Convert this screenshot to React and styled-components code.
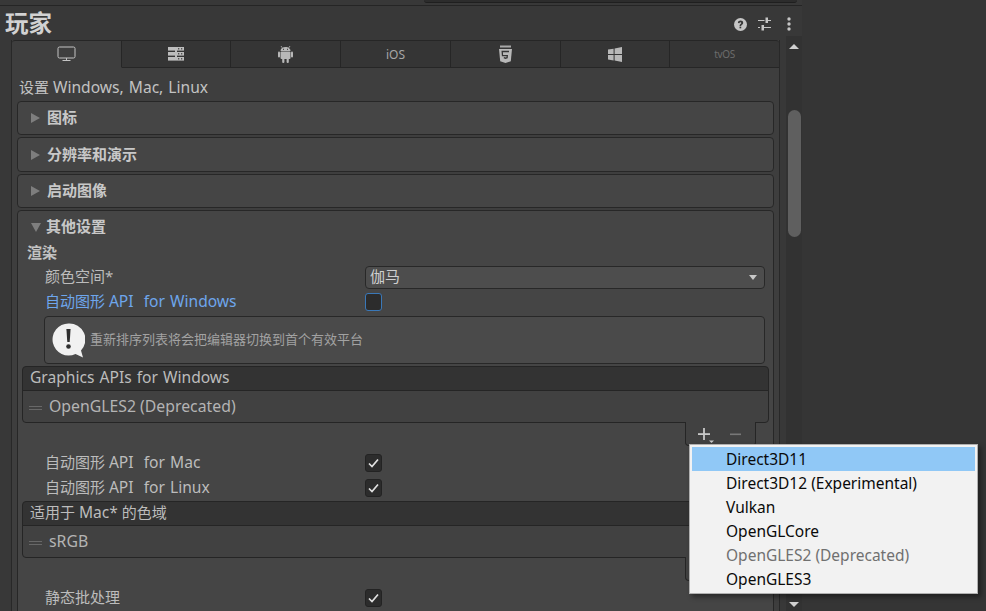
import React from "react";
import styled, { createGlobalStyle } from "styled-components";

const Global = createGlobalStyle`
  html, body { margin: 0; padding: 0; background: #353535; }
  * { box-sizing: border-box; }
`;

const FONT = `"Noto Sans", "Noto Sans CJK SC", sans-serif`;

const Frame = styled.div`
  position: relative;
  width: 986px;
  height: 611px;
  overflow: hidden;
  display: flex;
  background: #353535;
  font-family: ${FONT};
  font-size: 15px;
  color: #c2c2c2;
`;
const Inspector = styled.div`
  width: 802px;
  height: 611px;
  display: flex;
  flex-direction: column;
  background: #383838;
  box-shadow: 2px 0 3px rgba(0, 0, 0, 0.15);
  overflow: hidden;
`;
const TopStrip = styled.div`
  height: 6px;
  flex: none;
  display: flex;
  justify-content: flex-end;
  align-items: flex-start;
  padding-right: 5px;
  border-bottom: 1px solid #252525;
`;
const TopField = styled.div`
  width: 373px;
  height: 3px;
  background: #2c2c2c;
  border-bottom: 1px solid #1f1f1f;
  border-radius: 0 0 4px 4px;
`;
const TitleRow = styled.div`
  height: 30px;
  flex: none;
  display: flex;
  align-items: center;
  justify-content: space-between;
  padding: 0 6px 0 5px;
`;
const Title = styled.h1`
  margin: 3px 0 0;
  font-size: 23.5px;
  line-height: 30px;
  font-weight: 700;
  color: #d2d2d2;
`;
const Actions = styled.div`
  display: flex;
  align-items: center;
  gap: 9px;
  margin-top: 6px;
  color: #c4c4c4;
`;
const ActionSlot = styled.span`
  width: 15px;
  height: 16px;
  display: flex;
  align-items: center;
  justify-content: center;
`;
const Body = styled.div`
  flex: 1;
  min-height: 0;
  display: flex;
`;
const PanelColumn = styled.div`
  width: 769px;
  margin-left: 11px;
  padding-top: 4px;
  flex: none;
`;
const Panel = styled.div`
  height: 600px;
  background: #3e3e3e;
  border-left: 1px solid #282828;
  border-right: 1px solid #282828;
  display: flex;
  flex-direction: column;
`;
const Tabs = styled.div`
  height: 28px;
  flex: none;
  display: flex;
`;
const Tab = styled.div`
  flex: 1;
  display: flex;
  align-items: center;
  justify-content: center;
  background: ${(p) => (p.$active ? "#3e3e3e" : "#353535")};
  border-top: 1px solid #262626;
  border-bottom: 1px solid ${(p) => (p.$active ? "transparent" : "#262626")};
  border-right: 1px solid #262626;
  border-radius: ${(p) => (p.$active ? "3px 0 0 0" : p.$last ? "0 3px 0 0" : "0")};
  color: ${(p) => (p.$dim ? "#6c6c6c" : "#a6a6a6")};
  font-size: ${(p) => (p.$dim ? "10px" : "12px")};
  letter-spacing: ${(p) => (p.$dim ? "-0.3px" : "0")};
  &:last-child { border-right: 0; }
`;
const Caption = styled.div`
  height: 33px;
  flex: none;
  padding: 7px 0 0 7px;
  line-height: 24px;
  white-space: pre;
`;
const Latin = styled.span`
  font-size: 15.6px;
  word-spacing: 1px;
`;
const Stack = styled.div`
  margin: 0 5px;
  display: flex;
  flex-direction: column;
  gap: 2px;
`;
const Foldout = styled.section`
  flex: none;
  height: ${(p) => p.$h}px;
  background: #454545;
  border: 1px solid #272727;
  border-radius: 4px;
`;
const FoldHead = styled.div`
  height: ${(p) => p.$h || 32}px;
  display: flex;
  align-items: center;
  padding: 0 0 ${(p) => p.$pb ?? 3}px 13px;
  gap: 5px;
  font-weight: 700;
  color: #c8c8c8;
`;
const Tri = styled.span`
  width: 0;
  height: 0;
  flex: none;
  ${(p) =>
    p.$open
      ? `border-left: 5.5px solid transparent; border-right: 5.5px solid transparent; border-top: 9px solid #7e7e7e; margin-top: 3px;`
      : `border-top: 5.5px solid transparent; border-bottom: 5.5px solid transparent; border-left: 9px solid #7e7e7e; margin: 2px 2px 0 0;`}
`;
const Section = styled.div`
  height: 23px;
  padding-left: 9px;
  line-height: 21px;
  font-weight: 700;
  color: #c2c2c2;
`;
const Row = styled.div`
  height: 24.5px;
  display: flex;
  align-items: center;
  padding-left: 27px;
  margin-top: ${(p) => p.$mt || 0}px;
  padding-right: 8px;
`;
const Label = styled.span`
  width: 320px;
  flex: none;
  white-space: pre;
  line-height: 20px;
  margin-bottom: 2px;
  color: ${(p) => (p.$blue ? "#6ea6ec" : "#bcbcbc")};
`;
const Select = styled.div`
  flex: 1;
  height: 23px;
  display: flex;
  align-items: center;
  justify-content: space-between;
  padding: 0 7px 0 4px;
  background: #4d4d4d;
  border: 1px solid #282828;
  border-radius: 4px;
  color: #cfcfcf;
`;
const SelectText = styled.span`
  line-height: 18px;
  margin-bottom: 3px;
`;
const Caret = styled.span`
  width: 0;
  height: 0;
  margin-top: 1px;
  border-left: 4.5px solid transparent;
  border-right: 4.5px solid transparent;
  border-top: 5.5px solid #c8c8c8;
`;
const Check = styled.span`
  width: 17px;
  height: 18px;
  display: flex;
  align-items: center;
  justify-content: center;
  background: #2c2c2c;
  border: 1px solid ${(p) => (p.$blue ? "#3a78b8" : "#232323")};
  border-radius: 3px;
`;
const HelpBox = styled.div`
  height: 48px;
  margin: 2px 8px 2px 26px;
  display: flex;
  align-items: center;
  gap: 5px;
  padding-left: 7px;
  background: #4a4a4a;
  border: 1px solid #282828;
  border-radius: 4px;
  font-size: 13px;
  color: #a2a2a2;
`;
const HelpText = styled.span`
  line-height: 18px;
  margin-bottom: 3px;
`;
const List = styled.div`
  margin: ${(p) => p.$mt || 0}px 4px 0 4px;
  display: flex;
  flex-direction: column;
`;
const ListHead = styled.div`
  height: 25px;
  padding-left: 7px;
  line-height: 20px;
  background: #333333;
  border: 1px solid #252525;
  border-radius: 4px 4px 0 0;
  color: #bcbcbc;
  white-space: pre;
`;
const ListBody = styled.div`
  height: 33px;
  margin-top: -1px;
  padding: 0 0 0 6px;
  display: flex;
  align-items: center;
  gap: 7px;
  background: #414141;
  border: 1px solid #252525;
  border-radius: 0 0 4px 4px;
  color: #b4b4b4;
`;
const ItemText = styled.span`
  font-size: 15.8px;
  line-height: 20px;
  margin-bottom: 2px;
`;
const Handle = styled.span`
  width: 13px;
  height: 4px;
  border-top: 1px solid #686868;
  border-bottom: 1px solid #686868;
  margin-top: 3px;
`;
const ListFoot = styled.div`
  width: 71px;
  height: 24px;
  margin: -1px 13px 0 auto;
  display: flex;
  align-items: flex-start;
  gap: 14px;
  padding: 6px 0 0 12px;
  background: #414141;
  border: 1px solid #252525;
  border-top: 0;
  border-radius: 0 0 4px 4px;
  color: #c8c8c8;
  position: relative;
`;
const MinusSlot = styled.span`
  display: flex;
  margin-top: 5px;
`;
const Spacer = styled.div`
  height: ${(p) => p.$h}px;
`;
const ScrollBar = styled.div`
  width: 16px;
  height: 575px;
  margin-left: 6px;
  background: #323232;
  display: flex;
  flex-direction: column;
  align-items: center;
`;
const ArrowUp = styled.span`
  margin-top: 8px;
  width: 0;
  height: 0;
  border-left: 5px solid transparent;
  border-right: 5px solid transparent;
  border-bottom: 5px solid #d0d0d0;
`;
const Thumb = styled.div`
  width: 13px;
  height: 127px;
  margin-top: 61px;
  border-radius: 7px;
  background: #5f5f5f;
`;
const ArrowDown = styled.span`
  margin-top: auto;
  margin-bottom: 4px;
  width: 0;
  height: 0;
  border-left: 5px solid transparent;
  border-right: 5px solid transparent;
  border-top: 5px solid #d0d0d0;
`;
const Side = styled.div`
  flex: 1;
  background: #353535;
`;
const Menu = styled.div`
  position: absolute;
  left: 689px;
  top: 444px;
  width: 289px;
  height: 150px;
  padding: 2px;
  background: #f2f2f2;
  border: 1px solid #b0b0b0;
  box-shadow: 3px 3px 5px rgba(0, 0, 0, 0.4);
`;
const MenuItem = styled.div`
  height: 24px;
  line-height: 25px;
  padding-left: 34px;
  font-size: 15.5px;
  color: ${(p) => (p.$disabled ? "#707070" : "#0a0a0a")};
  background: ${(p) => (p.$active ? "#90c8f6" : "transparent")};
`;

const Help = () => (
  <svg width="13" height="13" viewBox="0 0 16 16">
    <circle cx="8" cy="8" r="8" fill="#c6c6c6" />
    <path d="M4.8 6.2C4.9 4.2 6.3 3.2 8.1 3.2c1.9 0 3.2 1.1 3.2 2.7 0 1.3-.7 1.9-1.5 2.5-.7.5-.9.8-.9 1.5H6.8c0-1.2.4-1.9 1.2-2.5.6-.5.9-.8.9-1.3 0-.6-.4-.9-1-.9-.7 0-1.1.5-1.1 1.2z" fill="#383838" />
    <rect x="6.8" y="10.6" width="2.1" height="2.1" fill="#383838" />
  </svg>
);
const Sliders = () => (
  <svg width="13" height="14" viewBox="0 0 13 14" fill="#c6c6c6">
    <rect x="0" y="3" width="6.5" height="1" />
    <rect x="7.5" y="0.5" width="2.5" height="5.5" />
    <rect x="9.5" y="3" width="3.5" height="1" />
    <rect x="0" y="10" width="2" height="1" />
    <rect x="3.5" y="8" width="2.5" height="5.5" />
    <rect x="6" y="10" width="7" height="1" />
  </svg>
);
const Dots = () => (
  <svg width="4" height="14" viewBox="0 0 4 14" fill="#c6c6c6">
    <circle cx="2" cy="2" r="1.7" />
    <circle cx="2" cy="7" r="1.7" />
    <circle cx="2" cy="12" r="1.7" />
  </svg>
);
const Monitor = () => (
  <svg width="19" height="16" viewBox="0 0 19 16" fill="none" stroke="#c4c4c4" strokeWidth="1">
    <rect x="1" y="1" width="17" height="11" rx="1.5" />
    <path d="M9.5 12v2.5M5.5 14.5h8" />
  </svg>
);
const Server = () => (
  <svg width="16" height="14" viewBox="0 0 16 14">
    {[0, 5, 10].map((y) => (
      <g key={y}>
        <rect x="0" y={y} width="16" height="3.6" fill="#bdbdbd" />
        <rect x="10" y={y + 1.2} width="1.3" height="1.2" fill="#3a3a3a" />
        <rect x="13" y={y + 1.2} width="1.3" height="1.2" fill="#3a3a3a" />
      </g>
    ))}
    <rect x="7" y="3" width="2" height="8" fill="#bdbdbd" />
  </svg>
);
const Android = () => (
  <svg width="15" height="18" viewBox="0 0 15 18" fill="#b8b8b8">
    <path d="M3 1l1.2 1.8M12 1l-1.2 1.8" stroke="#b8b8b8" strokeWidth=".8" />
    <path d="M2.5 6C2.5 3.5 4.8 2 7.5 2s5 1.5 5 4z" />
    <rect x="2.5" y="6.6" width="10" height="7.4" rx="1" />
    <rect x="0" y="6.6" width="2" height="6" rx="1" />
    <rect x="13" y="6.6" width="2" height="6" rx="1" />
    <rect x="4.2" y="13" width="2.2" height="5" rx="1" />
    <rect x="8.6" y="13" width="2.2" height="5" rx="1" />
    <rect x="5" y="3.8" width="1" height="1" fill="#353535" />
    <rect x="9" y="3.8" width="1" height="1" fill="#353535" />
  </svg>
);
const Html5 = () => (
  <svg width="13" height="19" viewBox="0 0 13 19">
    <rect x="1" y="0.5" width="11" height="2" fill="#a8a8a8" />
    <path d="M0 4h13l-1.2 12.2L6.5 18l-5.3-1.8z" fill="#b8b8b8" />
    <path d="M10 6.5H3.2l.3 4.2h4.8l-.2 2-1.6.5-1.7-.5" fill="none" stroke="#353535" strokeWidth="1.3" />
  </svg>
);
const Windows = () => (
  <svg width="14" height="15" viewBox="0 0 14 15" fill="#b8b8b8">
    <path d="M0 2.6l5.6-.9v5.3H0zM6.6 1.5L14 0v7H6.6zM0 8h5.6v5.4L0 12.5zM6.6 8H14v7l-7.4-1.4z" />
  </svg>
);
const Tick = () => (
  <svg width="11" height="10" viewBox="0 0 11 10" fill="none" stroke="#e2e2e2" strokeWidth="1.7">
    <path d="M1 5.5l3 3L10 1.5" />
  </svg>
);
const Bubble = () => (
  <svg width="33" height="35" viewBox="0 0 33 35">
    <path d="M16.5 0.5a16 16 0 1 0 7 30.4L31 34.5l-2-7A16 16 0 0 0 16.5.5z" fill="#f1f1f1" />
    <path d="M14.4 6h4.2l-.9 13h-2.4z" fill="#303030" />
    <circle cx="16.5" cy="23.5" r="2.3" fill="#303030" />
  </svg>
);
const Plus = () => (
  <svg width="18" height="16" viewBox="0 0 18 16" fill="#c8c8c8">
    <rect x="0" y="5.2" width="12" height="1.8" />
    <rect x="5.1" y="0" width="1.8" height="12" />
    <path d="M11 12.5h5L13.5 15z" />
  </svg>
);
const Minus = () => (
  <svg width="11" height="3" viewBox="0 0 11 3" fill="#787878">
    <rect width="11" height="1.6" y="0.5" />
  </svg>
);

const menu = [
  { t: "Direct3D11", active: true },
  { t: "Direct3D12 (Experimental)" },
  { t: "Vulkan" },
  { t: "OpenGLCore" },
  { t: "OpenGLES2 (Deprecated)", disabled: true },
  { t: "OpenGLES3" },
];

export default function App() {
  return (
    <Frame>
      <Global />
      <Inspector>
        <TopStrip>
          <TopField />
        </TopStrip>
        <TitleRow>
          <Title>玩家</Title>
          <Actions>
            <ActionSlot><Help /></ActionSlot>
            <ActionSlot><Sliders /></ActionSlot>
            <ActionSlot><Dots /></ActionSlot>
          </Actions>
        </TitleRow>
        <Body>
          <PanelColumn>
            <Panel>
              <Tabs>
                <Tab $active><Monitor /></Tab>
                <Tab><Server /></Tab>
                <Tab><Android /></Tab>
                <Tab>iOS</Tab>
                <Tab><Html5 /></Tab>
                <Tab><Windows /></Tab>
                <Tab $dim $last>tvOS</Tab>
              </Tabs>
              <Caption>设置 <Latin>Windows, Mac, Linux</Latin></Caption>
              <Stack>
                <Foldout $h={34}>
                  <FoldHead><Tri />图标</FoldHead>
                </Foldout>
                <Foldout $h={35}>
                  <FoldHead $pb={1}><Tri />分辨率和演示</FoldHead>
                </Foldout>
                <Foldout $h={34}>
                  <FoldHead><Tri />启动图像</FoldHead>
                </Foldout>
                <Foldout $h={420}>
                  <FoldHead $h={31} $pb={2}><Tri $open />其他设置</FoldHead>
                  <Section>渲染</Section>
                  <Row>
                    <Label>颜色空间*</Label>
                    <Select><SelectText>伽马</SelectText><Caret /></Select>
                  </Row>
                  <Row>
                    <Label $blue>自动图形 <Latin>{"API  for Windows"}</Latin></Label>
                    <Check $blue />
                  </Row>
                  <HelpBox>
                    <Bubble />
                    <HelpText>重新排序列表将会把编辑器切换到首个有效平台</HelpText>
                  </HelpBox>
                  <List>
                    <ListHead><Latin>Graphics APIs for Windows</Latin></ListHead>
                    <ListBody><Handle /><ItemText>OpenGLES2 (Deprecated)</ItemText></ListBody>
                    <ListFoot><Plus /><MinusSlot><Minus /></MinusSlot></ListFoot>
                  </List>
                  <Row $mt={5}>
                    <Label>自动图形 <Latin>{"API  for Mac"}</Latin></Label>
                    <Check><Tick /></Check>
                  </Row>
                  <Row>
                    <Label>自动图形 <Latin>{"API  for Linux"}</Latin></Label>
                    <Check><Tick /></Check>
                  </Row>
                  <List $mt={1}>
                    <ListHead>适用于 <Latin>Mac*</Latin> 的色域</ListHead>
                    <ListBody><Handle /><ItemText>sRGB</ItemText></ListBody>
                    <ListFoot />
                  </List>
                  <Spacer $h={5} />
                  <Row>
                    <Label>静态批处理</Label>
                    <Check><Tick /></Check>
                  </Row>
                </Foldout>
              </Stack>
            </Panel>
          </PanelColumn>
          <ScrollBar>
            <ArrowUp />
            <Thumb />
            <ArrowDown />
          </ScrollBar>
        </Body>
      </Inspector>
      <Side />
      <Menu>
        {menu.map((m) => (
          <MenuItem key={m.t} $active={m.active} $disabled={m.disabled}>{m.t}</MenuItem>
        ))}
      </Menu>
    </Frame>
  );
}
